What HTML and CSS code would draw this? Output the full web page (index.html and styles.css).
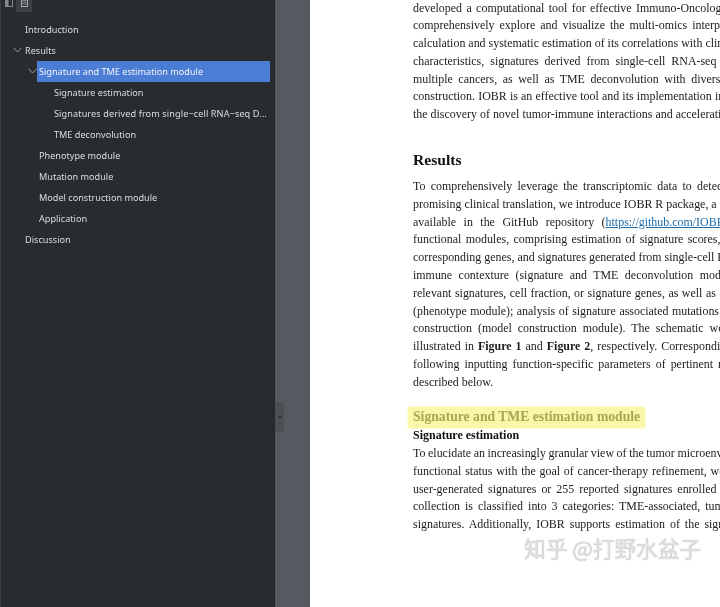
FILE: index.html
```html
<!DOCTYPE html>
<html lang="en">
<head>
<meta charset="utf-8">
<title>IOBR outline</title>
<link rel="stylesheet" href="styles.css">
</head>
<body>
<div class="app">
  <aside class="sidebar">
    <div class="toolbar">
      <span class="tool">
        <svg width="8" height="10" viewBox="0 0 8 10"><rect x="0.5" y="0.5" width="7" height="9" fill="none" stroke="#85888c"/><rect x="1" y="1" width="2.5" height="8" fill="#85888c"/></svg>
      </span>
      <span class="tool tool-active">
        <svg width="7" height="10" viewBox="0 0 7 10"><rect x="0.5" y="0.5" width="6" height="9" fill="none" stroke="#a5a8ab"/><path d="M1.5 3.5h4M1.5 5.2h4M1.5 7h4" stroke="#a5a8ab" stroke-width="0.7"/></svg>
      </span>
    </div>
    <nav class="tree">
      <div class="row lv0">Introduction</div>
      <div class="row lv0 has-chevron">
        <svg class="chevron" width="9" height="6" viewBox="0 0 9 6"><path d="M0.5 0.7 4.5 5l4-4.3" fill="none" stroke="#a9acaf" stroke-width="0.9"/></svg>
        Results
      </div>
      <div class="row lv1 selected">
        <svg class="chevron" width="9" height="6" viewBox="0 0 9 6"><path d="M0.5 0.7 4.5 5l4-4.3" fill="none" stroke="#a9acaf" stroke-width="0.9"/></svg>
        <span>Signature and TME estimation module</span>
      </div>
      <div class="row lv2">Signature estimation</div>
      <div class="row lv2 wide"><span class="clip">Signatures derived from single−cell RNA−seq Data analysis</span></div>
      <div class="row lv2">TME deconvolution</div>
      <div class="row lv1">Phenotype module</div>
      <div class="row lv1">Mutation module</div>
      <div class="row lv1">Model construction module</div>
      <div class="row lv1">Application</div>
      <div class="row lv0">Discussion</div>
    </nav>
  </aside>
  <div class="gutter"><div class="handle"><span class="grip"></span></div></div>
  <main class="page">
    <section class="para first">
      <div class="ln w14">developed a computational tool for effective Immuno-Oncology</div>
      <div class="ln w20">comprehensively explore and visualize the multi-omics interplay</div>
      <div class="ln w0">calculation and systematic estimation of its correlations with clinical</div>
      <div class="ln w30">characteristics, signatures derived from single-cell RNA-seq data</div>
      <div class="ln w26">multiple cancers, as well as TME deconvolution with diverse</div>
      <div class="ln w2">construction. IOBR is an effective tool and its implementation in</div>
      <div class="ln w0">the discovery of novel tumor-immune interactions and accelerating</div>
    </section>
    <h2 class="results">Results</h2>
    <section class="para">
      <div class="ln w23">To comprehensively leverage the transcriptomic data to detect</div>
      <div class="ln w0">promising clinical translation, we introduce IOBR R package, a</div>
      <div class="ln w45">available in the GitHub repository (<a class="link" href="#">https://github.com/IOBR</a></div>
      <div class="ln w13">functional modules, comprising estimation of signature scores,</div>
      <div class="ln w0">corresponding genes, and signatures generated from single-cell RNA</div>
      <div class="ln w35">immune contexture (signature and TME deconvolution module</div>
      <div class="ln w5">relevant signatures, cell fraction, or signature genes, as well as</div>
      <div class="ln w5">(phenotype module); analysis of signature associated mutations</div>
      <div class="ln w30">construction (model construction module). The schematic work</div>
      <div class="ln w10">illustrated in <b>Figure 1</b> and <b>Figure 2</b>, respectively. Corresponding</div>
      <div class="ln w20">following inputting function-specific parameters of pertinent modules</div>
      <div class="ln w0">described below.</div>
    </section>
    <div class="highlight-wrap"><h3 class="highlight">Signature and TME estimation module</h3></div>
    <h4 class="sub">Signature estimation</h4>
    <section class="para">
      <div class="ln wn4">To elucidate an increasingly granular view of the tumor microenvironment</div>
      <div class="ln w8">functional status with the goal of cancer-therapy refinement, we</div>
      <div class="ln w20">user-generated signatures or 255 reported signatures enrolled in</div>
      <div class="ln w20">collection is classified into 3 categories: TME-associated, tumor</div>
      <div class="ln w20">signatures. Additionally, IOBR supports estimation of the signature</div>
    </section>
    <div class="watermark">知乎 @打野水盆子</div>
  </main>
</div>
</body>
</html>
```
FILE: styles.css
```css
html, body {
  margin: 0;
  height: 100%;
  overflow: hidden;
}
.app {
  display: flex;
  width: 720px;
  height: 607px;
  overflow: hidden;
  filter: blur(0.4px);
}
.sidebar {
  flex: 0 0 275px;
  width: 275px;
  min-width: 0;
  box-sizing: border-box;
  background: #282c2f;
  border-left: 1px solid #3a3d41;
  border-right: 1px solid #24272a;
  font-family: "Noto Sans", "Liberation Sans", sans-serif;
  font-size: 9.15px;
  color: #dcdedf;
}
.toolbar {
  display: flex;
  height: 12px;
  padding-left: 2px;
  gap: 2px;
  margin-bottom: 6.5px;
  overflow: hidden;
}
.tool {
  display: flex;
  align-items: flex-start;
  justify-content: center;
  width: 11px;
  height: 12px;
}
.tool svg {
  margin-top: -3px;
}
.tool-active {
  width: 16px;
  background: #3d4145;
}
.tree {
  min-width: 0;
}
.row {
  position: relative;
  display: flex;
  align-items: center;
  height: 21px;
  box-sizing: border-box;
  white-space: nowrap;
  min-width: 0;
}
.lv0 { padding-left: 24px; }
.lv1 { padding-left: 38px; }
.lv2 { padding-left: 53px; padding-right: 7px; }
.wide { letter-spacing: 0.1px; }
.chevron {
  position: absolute;
  top: 7px;
  left: 12px;
}
.selected {
  margin-left: 36px;
  margin-right: 4px;
  padding-left: 2px;
  background: #4a7dd3;
  color: #f2f5fb;
}
.selected .chevron {
  left: -9px;
}
.clip {
  min-width: 0;
  overflow: hidden;
  text-overflow: ellipsis;
}
.gutter {
  position: relative;
  flex: 0 0 35px;
  background: #56595f;
}
.handle {
  position: absolute;
  left: 0;
  top: 402px;
  width: 9px;
  height: 30px;
  display: flex;
  align-items: center;
  justify-content: center;
  background: #4c4f54;
  border-radius: 0 3px 3px 0;
}
.grip {
  width: 4px;
  height: 2px;
  background: #33363a;
}
.page {
  position: relative;
  flex: 1;
  min-width: 0;
  box-sizing: border-box;
  background: #fff;
  padding: 0 0 0 103px;
  color: #1c1c1c;
  font-family: "Liberation Serif", "Times New Roman", serif;
  font-size: 11.95px;
  line-height: 17.8px;
  overflow: hidden;
}
.para { margin: 0; }
.first { margin-top: -0.5px; }
.ln {
  white-space: nowrap;
}
.wn4 { word-spacing: -0.4px; }
.w0 { word-spacing: 0; }
.w2 { word-spacing: 0.2px; }
.w5 { word-spacing: 0.5px; }
.w8 { word-spacing: 0.8px; }
.w10 { word-spacing: 1px; }
.w13 { word-spacing: 1.3px; }
.w14 { word-spacing: 1.4px; }
.w20 { word-spacing: 2px; }
.w23 { word-spacing: 2.3px; }
.w26 { word-spacing: 2.6px; }
.w30 { word-spacing: 3px; }
.w35 { word-spacing: 3.5px; }
.w45 { word-spacing: 4.5px; }
.link {
  color: #1a6aa8;
  text-decoration: underline;
}
.results {
  margin: 25.5px 0 8.5px;
  font-size: 15.6px;
  line-height: 20px;
  font-weight: 700;
  color: #111;
}
.highlight-wrap {
  margin: 15px 0 0 -5px;
  height: 20.5px;
}
.highlight {
  display: inline-block;
  margin: 0;
  padding: 0 5px;
  height: 21.5px;
  background: #fbf7a8;
  border-radius: 2px;
  box-shadow: 0 0 3px #fbf7a8;
  color: #a9a650;
  font-size: 13.67px;
  line-height: 20.5px;
  font-weight: 700;
  white-space: nowrap;
}
.sub {
  margin: 0;
  font-size: 12px;
  line-height: 17.8px;
  font-weight: 700;
  color: #111;
  position: relative;
}
.watermark {
  position: absolute;
  left: 214px;
  top: 536px;
  font-family: "Noto Sans CJK SC", sans-serif;
  font-size: 21.7px;
  line-height: 24px;
  white-space: nowrap;
  color: #e2e2e2;
  text-shadow: 0 0 1px #8f8f8f;
}
```
